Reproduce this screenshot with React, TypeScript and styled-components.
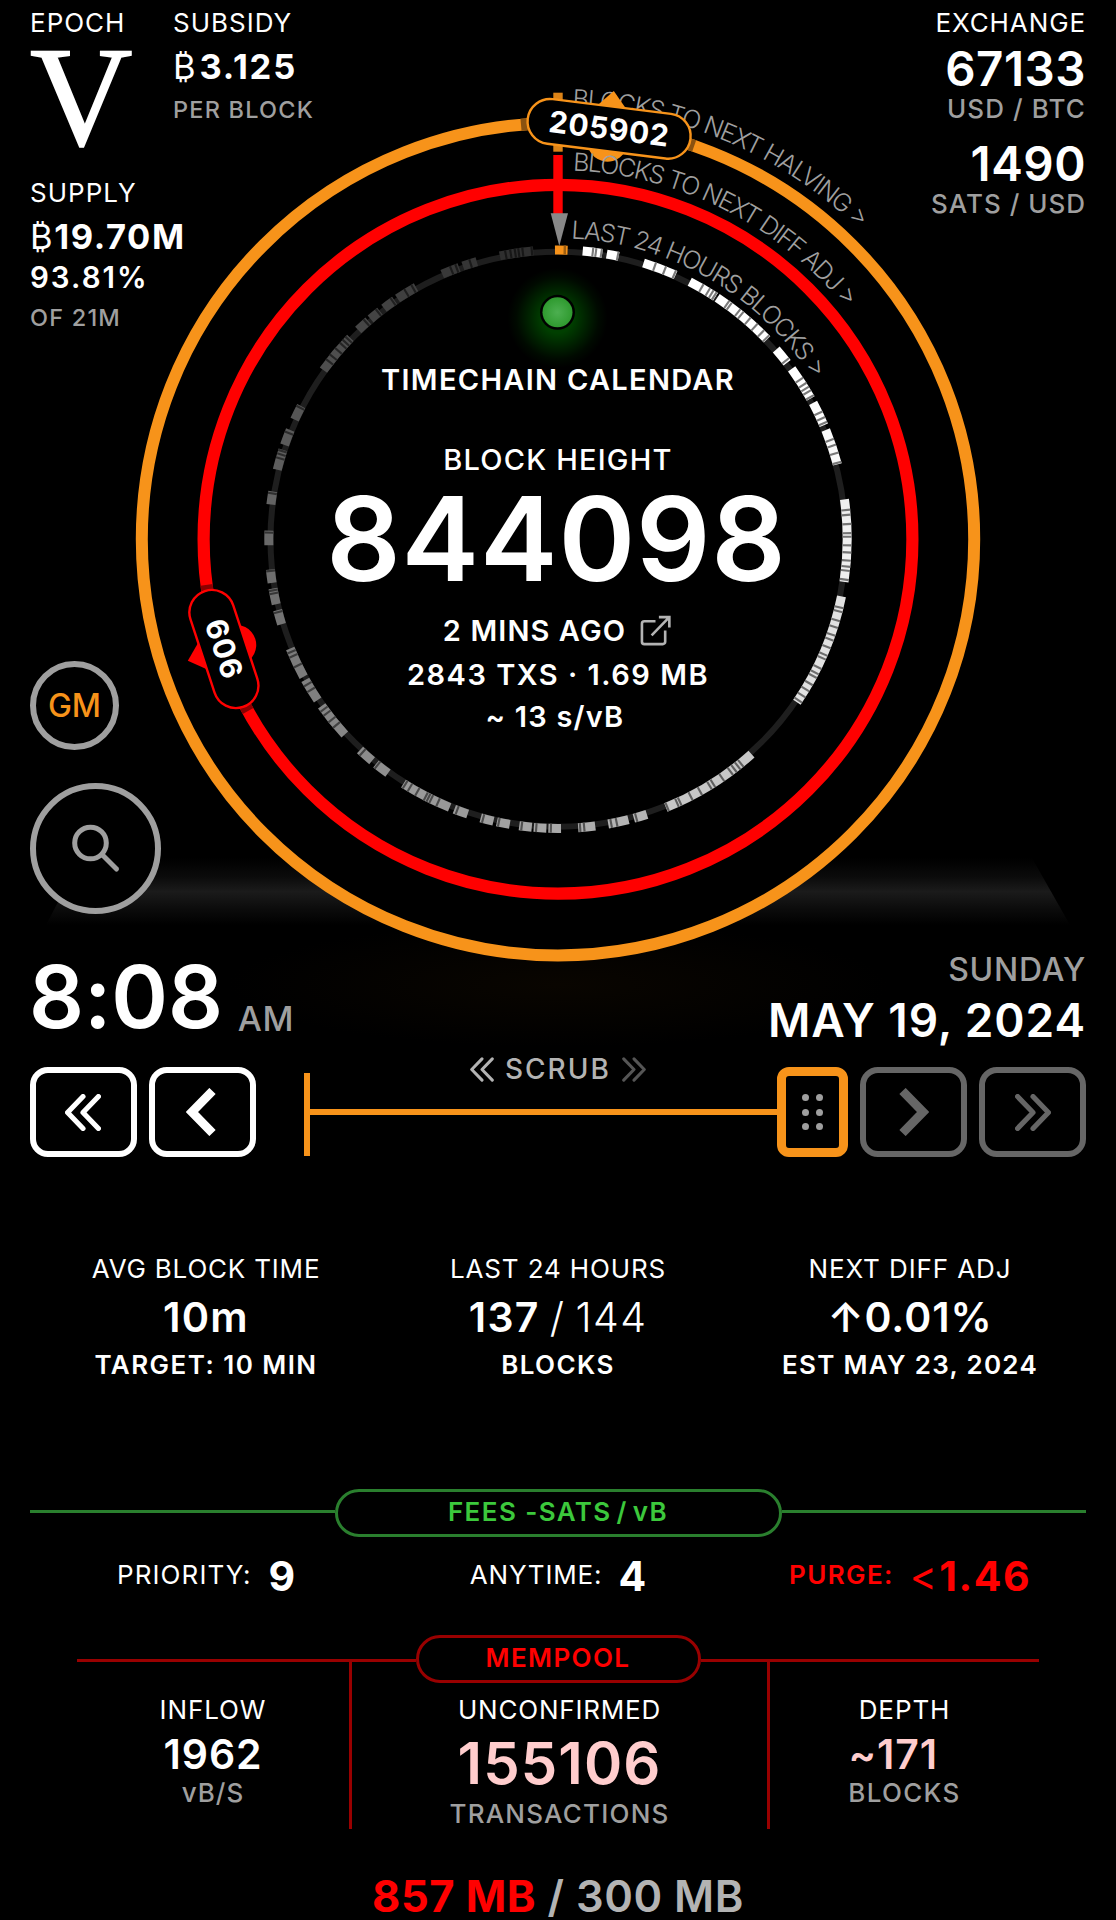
import React from "react";
import styled, { createGlobalStyle } from "styled-components";

const ORANGE = "#f7931a";
const RED = "#ff0000";
const GREY = "#9f9f9f";

const GlobalStyle = createGlobalStyle`
  * { box-sizing: border-box; }
  body {
    margin: 0;
    background: #000;
    color: #fff;
    font-family: Inter, "Liberation Sans", sans-serif;
  }
`;

const Page = styled.main`
  width: 1116px;
  height: 1920px;
  overflow: hidden;
  background: #000;
  display: flex;
  flex-direction: column;
`;

const Line = styled.div<{ $size: number; $lh: number; $w?: number; $c?: string; $ls?: number; $mt?: number; $mr?: number }>`
  font-size: ${(p) => p.$size}px;
  line-height: ${(p) => p.$lh}px;
  font-weight: ${(p) => p.$w ?? 400};
  color: ${(p) => p.$c ?? "#fff"};
  letter-spacing: ${(p) => p.$ls ?? 0}px;
  margin-top: ${(p) => p.$mt ?? 0}px;
  margin-right: ${(p) => p.$mr ?? 0}px;
  white-space: pre;
`;

const Hero = styled.section`
  display: grid;
  height: 940px;
  flex: none;
  > * { grid-area: 1 / 1; }
`;

const DialArt = styled.svg`
  display: block;
  overflow: visible;
`;

const TopLeft = styled.div`
  display: flex;
  align-items: flex-start;
  padding: 8px 0 0 30px;
`;

const Stack = styled.div<{ $width?: number; $align?: string }>`
  display: flex;
  flex-direction: column;
  width: ${(p) => (p.$width ? `${p.$width}px` : "auto")};
  align-items: ${(p) => p.$align ?? "flex-start"};
`;

const Numeral = styled.div`
  font-family: "Liberation Serif", serif;
  font-size: 142px;
  line-height: 118px;
  -webkit-text-stroke: 1.6px #fff;
`;

const Thin = styled.span<{ $w?: number; $gap?: number }>`
  font-weight: ${(p) => p.$w ?? 300};
  margin-right: ${(p) => p.$gap ?? 0}px;
`;

const Hot = styled.span`
  color: ${RED};
  font-weight: 700;
`;

const Tight = styled.span`
  word-spacing: -3px;
`;

const TopRight = styled(Stack)`
  justify-self: end;
  padding: 8px 30px 0 0;
`;

const Center = styled(Stack)`
  justify-self: center;
  padding-top: 358px;
`;

const AgeRow = styled.div`
  display: flex;
  align-items: center;
  gap: 14px;
  height: 45px;
  margin: 10px 2px 0 0;
`;

const SideButtons = styled.div`
  justify-self: start;
  display: flex;
  flex-direction: column;
  gap: 33px;
  padding: 661px 0 0 30px;
`;

const Round = styled.button<{ $d: number }>`
  width: ${(p) => p.$d}px;
  height: ${(p) => p.$d}px;
  border: 6px solid ${GREY};
  border-radius: 50%;
  background: #000;
  color: ${ORANGE};
  font: 500 32px Inter, sans-serif;
  padding: 0;
  display: flex;
  align-items: center;
  justify-content: center;
`;

const ClockRow = styled.section`
  height: 127px;
  flex: none;
  display: flex;
  justify-content: space-between;
  align-items: flex-start;
  padding: 0 30px 0 29px;
  position: relative;
`;

const Clock = styled.div`
  display: flex;
  align-items: flex-start;
  gap: 15px;
`;

const Controls = styled.section`
  height: 90px;
  flex: none;
  display: flex;
  gap: 12px;
  padding: 0 30px;
`;

const Key = styled.button<{ $c: string; $nudge?: number }>`
  width: 107px;
  height: 90px;
  flex: none;
  border: 6px solid ${(p) => p.$c};
  border-radius: 18px;
  background: #000;
  color: ${(p) => p.$c};
  padding: 0 ${(p) => p.$nudge ?? 0}px 0 0;
  display: flex;
  align-items: center;
  justify-content: center;
`;

const Slider = styled.div`
  flex: 1;
  margin-left: 36px;
  display: grid;
  height: 90px;
  > * { grid-area: 1 / 1; }
`;

const Rail = styled.div`
  border-left: 6px solid ${ORANGE};
  height: 83px;
  align-self: end;
  margin-bottom: 1px;
  display: flex;
  align-items: flex-start;
  padding-top: 36px;
  &::after {
    content: "";
    height: 6px;
    flex: 1;
    margin-right: 60px;
    background: ${ORANGE};
  }
`;

const Handle = styled.div`
  justify-self: end;
  width: 71px;
  height: 90px;
  border: 9px solid ${ORANGE};
  border-radius: 12px;
  background: #000;
  display: flex;
  align-items: center;
  justify-content: center;
`;

const Dots = styled.div`
  display: grid;
  grid-template-columns: 7px 7px;
  gap: 7.4px;
  i {
    width: 7px;
    height: 7px;
    border-radius: 50%;
    background: ${GREY};
  }
`;

const Scrub = styled.div`
  justify-self: start;
  align-self: start;
  margin: -10px 0 0 166px;
  height: 24px;
  display: flex;
  align-items: center;
  gap: 11px;
  color: #b3b3b3;
`;

const Thirds = styled.section<{ $mt: number }>`
  display: grid;
  grid-template-columns: repeat(3, 1fr);
  margin: ${(p) => p.$mt}px 30px 0;
  flex: none;
`;

const Fee = styled.div`
  display: flex;
  justify-content: center;
  align-items: center;
  height: 50px;
`;

const Divider = styled.div<{ $c: string; $mt: number; $inset: number; $shift: number }>`
  display: flex;
  align-items: center;
  margin: ${(p) => p.$mt}px ${(p) => p.$inset}px 0;
  height: 48px;
  flex: none;
  &::before,
  &::after {
    content: "";
    flex: 1;
    height: 3px;
    margin-top: ${(p) => p.$shift}px;
    background: ${(p) => p.$c};
  }
`;

const Tag = styled.div<{ $c: string; $t: string; $width: number }>`
  width: ${(p) => p.$width}px;
  height: 48px;
  border: 3px solid ${(p) => p.$c};
  border-radius: 24px;
  color: ${(p) => p.$t};
  font-size: 26px;
  font-weight: 600;
  line-height: 40px;
  text-align: center;
  white-space: pre;
  letter-spacing: 1.4px;
`;

const Pool = styled.section`
  display: grid;
  grid-template-columns: 272px 1fr 269px;
  margin: -21px 77px 0;
  height: 167px;
  flex: none;
`;

const PoolCell = styled(Stack)<{ $edge?: boolean }>`
  padding-top: 33px;
  border: solid #990000;
  border-width: ${(p) => (p.$edge ? "0 3px" : "0")};
`;

type Pt = [number, number];
const CX = 558;
const CY = 539.2;
const at = (deg: number, r: number): Pt => {
  const a = (deg * Math.PI) / 180;
  return [CX + r * Math.sin(a), CY - r * Math.cos(a)];
};
const arc = (from: number, to: number, r: number) => {
  const [x0, y0] = at(from, r);
  const [x1, y1] = at(to, r);
  return `M${x0.toFixed(2)} ${y0.toFixed(2)}A${r} ${r} 0 ${to - from > 180 ? 1 : 0} 1 ${x1.toFixed(2)} ${y1.toFixed(2)}`;
};

/* Runs of mined blocks: [from, to, separators...] in degrees. */
const RUNS: number[][] = [
  [4.9, 8.8, 6.7, 7.3, 8.4],
  [9.7, 12.1, 11.7],
  [17.2, 24, 19.3, 21.4, 23.5],
  [27.1, 33, 29.5, 31, 31.8, 32.5],
  [33.4, 46.3, 35.5, 36.1, 38.2, 39, 40.8, 42.6, 44.4, 45.8],
  [49, 52.4, 51.7],
  [53.9, 60.9, 56.4, 57.6, 58.5, 59.3, 60.4],
  [61.9, 66.8, 64, 65.2, 66.2],
  [67.8, 75, 69.8, 71, 72.6, 74.5],
  [82.1, 98.5, 84, 85, 86.8, 88.6, 89.3, 91, 92.4, 94, 95.2, 96, 97.8],
  [101.4, 124.3, 103.4, 104.2, 106, 107.4, 109, 110, 111.6, 113.2, 114, 116, 117.2, 118, 119.6, 121, 122.4, 123.6],
  [138, 158.1, 140.6, 141.4, 142.3, 143.2, 145.3, 147.4, 148.2, 150.4, 152.5, 154.9, 155.5, 157.6],
  [162.1, 164.8, 164.1],
  [165.9, 170, 168.1, 169.2],
  [172.6, 176, 174.6, 175.4],
  [179.4, 181.9, 181.2],
  [182.3, 184.8, 184.1],
  [185.2, 187.7, 187],
  [189.6, 192.2, 191.6],
  [192.9, 195.5, 194.8],
  [198.2, 201, 200.2],
  [202, 212.3, 204.3, 205.8, 206.4, 207, 208.9, 210.6, 211.7],
  [216, 219, 218.4],
  [220, 223.2, 222.3],
  [227.5, 234.8, 229.8, 231.2, 232.8, 233.8],
  [236.2, 240.9, 238.4, 239.7],
  [241.6, 247.8, 243.9, 246, 246.9],
  [252.9, 255.8, 255.2],
  [257, 260.2, 259, 259.6],
  [261.3, 264, 263.5],
  [268.8, 271.7, 271.1],
  [276.9, 279.5, 278.9],
  [283.9, 288, 286, 286.8, 287.5],
  [289, 292.2, 291.3],
  [294.4, 297.4, 296.8],
  [305.8, 314.1, 307.6, 308.8, 310.4, 311.8, 312.6, 313.4],
  [316.3, 319, 318.3],
  [319.6, 322, 321.4],
  [323, 325.6, 325],
  [326.3, 330.6, 328.2, 329.8],
  [336.4, 340, 338.2, 339.3],
  [340.8, 343.7, 342.2],
  [348.4, 355.1, 349.4, 350.4, 351.3, 352, 352.8, 354.6],
];

const shade = (deg: number, k = 1) => {
  const v = Math.round(k * (deg < 60 ? 255 : 255 - (deg - 60) * 0.72));
  return `rgb(${v},${v},${v})`;
};

function Marker({ deg, r, color, width, label, flip }: { deg: number; r: number; color: string; width: number; label: string; flip?: boolean }) {
  const [x, y] = at(deg, r);
  return (
    <g transform={`translate(${x.toFixed(1)} ${y.toFixed(1)}) rotate(${deg})`}>
      <path d="M-18 -18L0 -38L18 -18Z" fill={color} />
      <circle cx="0" cy="13" r="20" fill={color} />
      <rect x={-width / 2 + 1} y="-22.5" width={width - 2} height="45" rx="22.5" fill="#000" stroke={color} strokeWidth="2.4" />
      <text
        x="0"
        y="10.5"
        textAnchor="middle"
        fontSize="30"
        fontWeight="700"
        letterSpacing="0.7"
        fill="#fff"
        transform={flip ? "rotate(180)" : undefined}
      >
        {label}
      </text>
    </g>
  );
}

function Dial() {
  return (
    <DialArt width="1116" height="940" viewBox="0 0 1116 940">
      <defs>
        <linearGradient id="floor" x1="0" y1="0" x2="0" y2="1">
          <stop offset="0" stopColor="#1b1b1b" stopOpacity="0" />
          <stop offset="0.28" stopColor="#1b1b1b" stopOpacity="0.4" />
          <stop offset="0.5" stopColor="#1b1b1b" />
          <stop offset="0.75" stopColor="#1b1b1b" stopOpacity="0.45" />
          <stop offset="1" stopColor="#1b1b1b" stopOpacity="0" />
        </linearGradient>
        <radialGradient id="ember">
          <stop offset="0" stopColor="#090500" />
          <stop offset="1" stopColor="#090500" stopOpacity="0" />
        </radialGradient>
        <radialGradient id="glow">
          <stop offset="0.3" stopColor="#003f00" />
          <stop offset="0.6" stopColor="#002000" />
          <stop offset="0.82" stopColor="#000a00" />
          <stop offset="1" stopColor="#000" />
        </radialGradient>
        <radialGradient id="lamp">
          <stop offset="0" stopColor="#4caf50" />
          <stop offset="1" stopColor="#2f9a2f" />
        </radialGradient>
        <path id="p-halving" d={arc(1.9, 90, 432)} />
        <path id="p-diff" d={arc(2.3, 90, 369)} />
        <path id="p-day" d={arc(2.5, 100, 301)} />
      </defs>
      <path d="M81 858H1032L1070 925H46Z" fill="url(#floor)" />
      <ellipse cx="558" cy="985" rx="330" ry="62" fill="url(#ember)" />
      <circle cx={CX} cy={CY} r="416.2" fill="#000" stroke={ORANGE} strokeWidth="12" />
      <circle cx={CX} cy={CY} r="354.4" fill="none" stroke={RED} strokeWidth="12.2" />
      <path d={arc(-5.1, 19.1, 416.2)} fill="none" stroke="#8a5210" strokeWidth="12" />
      <path d={arc(241, 262.6, 354.4)} fill="none" stroke="#8a0000" strokeWidth="12.2" />
      <circle cx={CX} cy={CY} r="287.5" fill="none" stroke="#1e1e1e" strokeWidth="6" />
      {RUNS.map(([from, to, ...cuts]) => (
        <g key={from} fill="none" strokeWidth="9">
          <path d={arc(from, to, 289.2)} stroke={shade(from)} />
          {cuts.map((c) => (
            <path key={c} d={arc(c, c + 0.42, 289.2)} stroke={shade(from, 0.48)} />
          ))}
        </g>
      ))}
      <path d={arc(-0.6, 1.9, 289.2)} fill="none" stroke={ORANGE} strokeWidth="9" />
      <path d={arc(1.1, 1.6, 289.2)} fill="none" stroke="#a05f10" strokeWidth="9" />
      <rect x="553.3" y="92.7" width="9.4" height="59" fill="#dc8317" />
      <rect x="553.3" y="155" width="9.4" height="59" fill={RED} />
      <path d="M550.7 213.3H568L559.3 246Z" fill="#888" />
      <g fill={GREY} fontSize="25" fontWeight="300">
        <text textLength="318"><textPath href="#p-halving">BLOCKS TO NEXT HALVING &gt;</textPath></text>
      </g>
      <Marker deg={7.1} r={413.6} color={ORANGE} width={166} label="205902" />
      <Marker deg={251.8} r={351.7} color={RED} width={124} label="606" flip />
      <g fill={GREY} fontSize="25" fontWeight="300">
        <text textLength="315"><textPath href="#p-diff">BLOCKS TO NEXT DIFF ADJ &gt;</textPath></text>
        <text textLength="291"><textPath href="#p-day">LAST 24 HOURS BLOCKS &gt;</textPath></text>
      </g>
      <circle cx="557.5" cy="318" r="50" fill="url(#glow)" />
      <circle cx="557.5" cy="312.3" r="17.5" fill="#000" />
      <circle cx="557.5" cy="312.3" r="15" fill="url(#lamp)" />
    </DialArt>
  );
}

function Chevrons({ w, h, sw, flip, color }: { w: number; h: number; sw: number; flip?: boolean; color?: string }) {
  const d = flip ? "M2.5 2.5L17.5 18L2.5 33.5M17.5 2.5L32.5 18L17.5 33.5" : "M17.5 2.5L2.5 18L17.5 33.5M32.5 2.5L17.5 18L32.5 33.5";
  return (
    <svg width={w} height={h} viewBox="0 0 35 36" fill="none" stroke={color ?? "currentColor"} strokeWidth={sw} strokeLinecap="round" strokeLinejoin="round">
      <path d={d} />
    </svg>
  );
}

function Chevron({ flip }: { flip?: boolean }) {
  return (
    <svg width="30" height="48" viewBox="0 0 30 48" fill="none" stroke="currentColor" strokeWidth="8.8">
      <path d={flip ? "M3.5 3L24 24L3.5 45" : "M26.5 3L6 24L26.5 45"} />
    </svg>
  );
}

export default function App() {
  return (
    <Page>
      <GlobalStyle />
      <Hero>
        <Dial />
        <TopLeft>
          <Stack $width={143}>
            <Line $size={26} $lh={30} $ls={1}>EPOCH</Line>
            <Numeral>V</Numeral>
            <Line $size={26} $lh={30} $mt={22} $ls={1}>SUPPLY</Line>
            <Line $size={34.5} $lh={57} $w={700} $ls={1.6}><Thin $w={400}>₿</Thin>19.70M</Line>
            <Line $size={29.5} $lh={25} $w={600} $ls={2}>93.81%</Line>
            <Line $size={23.5} $lh={55} $w={500} $c={GREY} $ls={1.2}>OF 21M</Line>
          </Stack>
          <Stack>
            <Line $size={26} $lh={30} $ls={1}>SUBSIDY</Line>
            <Line $size={34.5} $lh={58} $w={700} $ls={1.8}><Thin $w={400} $gap={2}>₿</Thin>3.125</Line>
            <Line $size={23.5} $lh={27} $w={500} $c={GREY} $ls={1.2}>PER BLOCK</Line>
          </Stack>
        </TopLeft>
        <TopRight $align="flex-end">
          <Line $size={26} $lh={30} $ls={0.9}>EXCHANGE</Line>
          <Line $size={47.5} $lh={61} $w={600} $ls={0.5}>67133</Line>
          <Line $size={26} $lh={20} $w={500} $c={GREY} $ls={1.1}>USD / BTC</Line>
          <Line $size={47.5} $lh={57} $mt={16} $w={600} $ls={0.5}>1490</Line>
          <Line $size={26} $lh={24} $w={500} $c={GREY} $ls={1}>SATS / USD</Line>
        </TopRight>
        <Center $align="center">
          <Line $size={29} $lh={44} $w={600} $ls={1.3}>TIMECHAIN CALENDAR</Line>
          <Line $size={29} $lh={40} $mt={38} $w={500} $ls={1.2}>BLOCK HEIGHT</Line>
          <Line $size={116.5} $lh={118} $w={600} $ls={0.8} $mr={3}>844098</Line>
          <AgeRow>
            <Line $size={29} $lh={45} $w={600} $ls={1.1}>2 MINS AGO</Line>
            <svg width="31" height="32" viewBox="0 0 32 32" fill="none" stroke="#b3b3b3" strokeWidth="2.7">
              <path d="M16 6H4.5A2.5 2.5 0 0 0 2 8.5V27A2.5 2.5 0 0 0 4.5 29.5H23.5A2.5 2.5 0 0 0 26 27V15.5" />
              <path d="M12 20.5L30 2M19.5 1.7H30.3V12.5" />
            </svg>
          </AgeRow>
          <Line $size={29} $lh={43} $w={600} $ls={1.5}>2843 TXS · 1.69 MB</Line>
          <Line $size={29} $lh={41} $w={600} $ls={1.2} $mr={6}>~ 13 s/vB</Line>
        </Center>
        <SideButtons>
          <Round $d={89}>GM</Round>
          <Round $d={131}>
            <svg width="60" height="60" viewBox="0 0 60 60" fill="none" stroke={GREY} strokeWidth="5" strokeLinecap="round">
              <circle cx="24.5" cy="24" r="15.8" />
              <path d="M36 35.5L50.5 50" />
            </svg>
          </Round>
        </SideButtons>
      </Hero>
      <ClockRow>
        <Clock>
          <Line $size={86} $lh={114} $w={600} $ls={-0.1}>8:08</Line>
          <Line $size={34} $lh={114} $mt={22} $w={500} $c={GREY} $ls={0.5}>AM</Line>
        </Clock>
        <Stack $align="flex-end">
          <Line $size={32} $lh={59} $w={500} $c={GREY} $ls={0.8}>SUNDAY</Line>
          <Line $size={46} $lh={43} $w={600} $ls={0.9}>MAY 19, 2024</Line>
        </Stack>
      </ClockRow>
      <Controls>
        <Key $c="#ffffff" $nudge={2}><Chevrons w={36} h={37} sw={5} /></Key>
        <Key $c="#ffffff" $nudge={3}><Chevron /></Key>
        <Slider>
          <Rail />
          <Scrub>
            <Chevrons w={24} h={25} sw={4.4} />
            <Line $size={28} $lh={24} $w={500} $c="#b3b3b3" $ls={2}>SCRUB</Line>
            <Chevrons w={24} h={25} sw={4.4} flip color="#555" />
          </Scrub>
          <Handle>
            <Dots><i /><i /><i /><i /><i /><i /></Dots>
          </Handle>
        </Slider>
        <Key $c="#666666"><Chevron flip /></Key>
        <Key $c="#666666"><Chevrons w={36} h={37} sw={5} flip /></Key>
      </Controls>
      <Thirds $mt={92}>
        <Stack $align="center">
          <Line $size={26} $lh={40} $ls={0.8}>AVG BLOCK TIME</Line>
          <Line $size={41.5} $lh={57} $w={600} $ls={1.2}>10m</Line>
          <Line $size={26} $lh={38} $w={600} $ls={1.45}>TARGET: 10 MIN</Line>
        </Stack>
        <Stack $align="center">
          <Line $size={26} $lh={40} $ls={0.85}>LAST 24 HOURS</Line>
          <Line $size={41} $lh={57} $w={600} $ls={1.4}>137<Tight><Thin> / </Thin></Tight><Thin>144</Thin></Line>
          <Line $size={26} $lh={38} $w={600} $ls={1.4}>BLOCKS</Line>
        </Stack>
        <Stack $align="center">
          <Line $size={26} $lh={40} $ls={0.9}>NEXT DIFF ADJ</Line>
          <Line $size={41} $lh={57} $w={600} $ls={0.9}>↑0.01%</Line>
          <Line $size={26} $lh={38} $w={600} $ls={1.3}>EST MAY 23, 2024</Line>
        </Stack>
      </Thirds>
      <Divider $c="#2a7f2e" $mt={105} $inset={30} $shift={-3}>
        <Tag $c="#2a7f2e" $t="#3cc83c" $width={447}>FEES -SATS<Tight> / </Tight>vB</Tag>
      </Divider>
      <Thirds $mt={13}>
        <Fee>
          <Line $size={26} $lh={48} $ls={1.1}>PRIORITY:  </Line>
          <Line $size={41} $lh={50} $mt={2} $w={700}>9</Line>
        </Fee>
        <Fee>
          <Line $size={26} $lh={48} $ls={0.8}>ANYTIME:  </Line>
          <Line $size={41} $lh={50} $mt={2} $w={700}>4</Line>
        </Fee>
        <Fee>
          <Line $size={26} $lh={48} $w={600} $c={RED} $ls={1.4}>PURGE:  </Line>
          <Line $size={41} $lh={50} $mt={2} $w={700} $c={RED} $ls={1.5}><Thin $w={400} $gap={1}>&lt;</Thin>1.46</Line>
        </Fee>
      </Thirds>
      <Divider $c="#990000" $mt={35} $inset={77} $shift={3}>
        <Tag $c="#990000" $t={RED} $width={285}>MEMPOOL</Tag>
      </Divider>
      <Pool>
        <PoolCell $align="center">
          <Line $size={26} $lh={30} $ls={0.9}>INFLOW</Line>
          <Line $size={41} $lh={59} $w={600} $ls={0.9}>1962</Line>
          <Line $size={26} $lh={17} $w={500} $c={GREY} $ls={1}>vB/S</Line>
        </PoolCell>
        <PoolCell $align="center" $edge>
          <Line $size={26} $lh={30} $ls={0.8}>UNCONFIRMED</Line>
          <Line $size={58} $lh={77} $w={600} $c="#ffcdcd" $ls={1.1}>155106</Line>
          <Line $size={26} $lh={23} $w={500} $c={GREY} $ls={1.2}>TRANSACTIONS</Line>
        </PoolCell>
        <PoolCell $align="center">
          <Line $size={26} $lh={30} $ls={0.9}>DEPTH</Line>
          <Line $size={41} $lh={59} $w={600} $c="#ffcdcd" $ls={0.9}>~171  </Line>
          <Line $size={26} $lh={17} $w={500} $c={GREY} $ls={1.3}>BLOCKS</Line>
        </PoolCell>
      </Pool>
      <Stack $align="center">
        <Line $size={43.5} $lh={46} $mt={44} $w={600} $c="#b3b3b3" $ls={0.5}><Hot>857 MB</Hot> / 300 MB</Line>
      </Stack>
    </Page>
  );
}
